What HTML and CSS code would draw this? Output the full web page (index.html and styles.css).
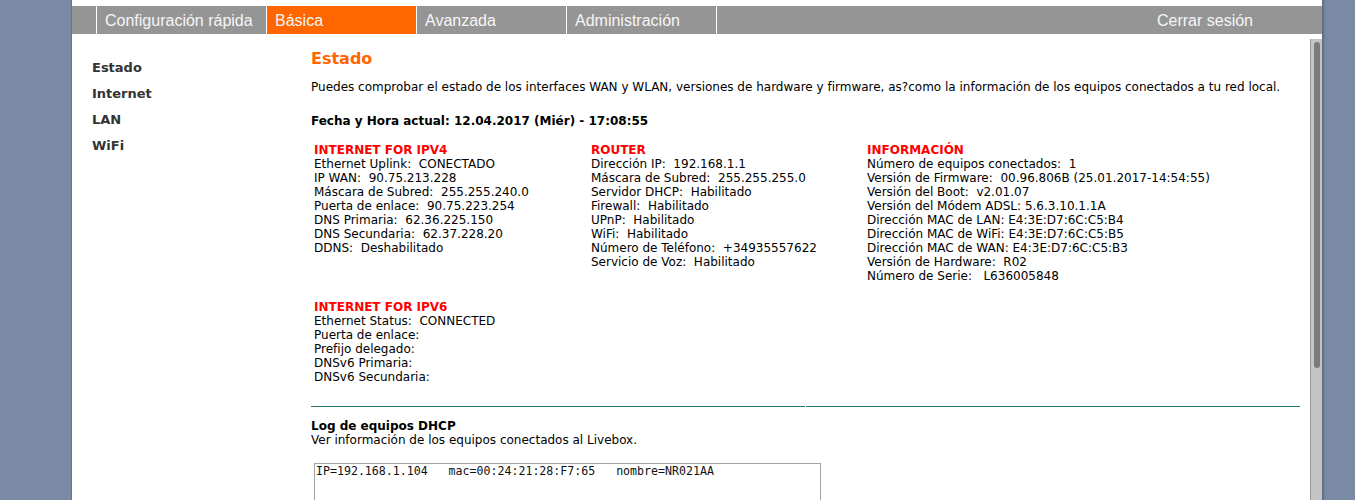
FILE: index.html
```html
<!DOCTYPE html>
<html lang="es">
<head>
<meta charset="utf-8">
<title>Estado</title>
<link rel="stylesheet" href="styles.css">
</head>
<body>
<div class="page">
  <nav class="topnav">
    <div class="tab tab-blank"></div>
    <div class="tab tab-wide">Configuración rápida</div>
    <div class="tab tab-active">Básica</div>
    <div class="tab">Avanzada</div>
    <div class="tab">Administración</div>
    <div class="tab tab-rest">Cerrar sesión</div>
  </nav>
  <div class="main">
    <aside class="side">
      <div class="side-item">Estado</div>
      <div class="side-item">Internet</div>
      <div class="side-item">LAN</div>
      <div class="side-item">WiFi</div>
    </aside>
    <div class="frame">
      <div class="content">
        <h1 class="title">Estado</h1>
        <p class="intro">Puedes comprobar el estado de los interfaces WAN y WLAN, versiones de hardware y firmware, as?como la información de los equipos conectados a tu red local.</p>
        <p class="date">Fecha y Hora actual: 12.04.2017 (Miér) - 17:08:55</p>
        <div class="grid">
          <div class="col">
            <div class="col-title">INTERNET FOR IPV4</div>
            <div>Ethernet Uplink:&nbsp; CONECTADO</div>
            <div>IP WAN:&nbsp; 90.75.213.228</div>
            <div>Máscara de Subred:&nbsp; 255.255.240.0</div>
            <div>Puerta de enlace:&nbsp; 90.75.223.254</div>
            <div>DNS Primaria:&nbsp; 62.36.225.150</div>
            <div>DNS Secundaria:&nbsp; 62.37.228.20</div>
            <div>DDNS:&nbsp; Deshabilitado</div>
          </div>
          <div class="col">
            <div class="col-title">ROUTER</div>
            <div>Dirección IP:&nbsp; 192.168.1.1</div>
            <div>Máscara de Subred:&nbsp; 255.255.255.0</div>
            <div>Servidor DHCP:&nbsp; Habilitado</div>
            <div>Firewall:&nbsp; Habilitado</div>
            <div>UPnP:&nbsp; Habilitado</div>
            <div>WiFi:&nbsp; Habilitado</div>
            <div>Número de Teléfono:&nbsp; +34935557622</div>
            <div>Servicio de Voz:&nbsp; Habilitado</div>
          </div>
          <div class="col">
            <div class="col-title">INFORMACIÓN</div>
            <div>Número de equipos conectados:&nbsp; 1</div>
            <div>Versión de Firmware:&nbsp; 00.96.806B (25.01.2017-14:54:55)</div>
            <div>Versión del Boot:&nbsp; v2.01.07</div>
            <div>Versión del Módem ADSL: 5.6.3.10.1.1A</div>
            <div>Dirección MAC de LAN: E4:3E:D7:6C:C5:B4</div>
            <div>Dirección MAC de WiFi: E4:3E:D7:6C:C5:B5</div>
            <div>Dirección MAC de WAN: E4:3E:D7:6C:C5:B3</div>
            <div>Versión de Hardware:&nbsp; R02</div>
            <div>Número de Serie:&nbsp;&nbsp; L636005848</div>
          </div>
          <div class="col col-v6">
            <div class="col-title">INTERNET FOR IPV6</div>
            <div>Ethernet Status:&nbsp; CONNECTED</div>
            <div>Puerta de enlace:</div>
            <div>Prefijo delegado:</div>
            <div>DNSv6 Primaria:</div>
            <div>DNSv6 Secundaria:</div>
          </div>
        </div>
        <div class="rule"><span></span><span></span></div>
        <div class="log-title">Log de equipos DHCP</div>
        <div class="log-desc">Ver información de los equipos conectados al Livebox.</div>
        <div class="logbox">IP=192.168.1.104   mac=00:24:21:28:F7:65   nombre=NR021AA</div>
      </div>
      <div class="scrollbar"><div class="thumb"></div></div>
    </div>
  </div>
</div>
</body>
</html>
```
FILE: styles.css
```css
html, body {
  margin: 0;
  padding: 0;
}
body {
  background: #7a8aa4;
  height: 500px;
  overflow: hidden;
}
.page {
  margin-left: 72px;
  width: 1250px;
  height: 500px;
  background: #ffffff;
  padding-top: 6px;
  box-sizing: border-box;
  box-shadow: -1px 0 0 #66748c, 2px 0 2px #5f6c83;
  display: flex;
  flex-direction: column;
}
.topnav {
  display: flex;
  height: 28px;
  background: #959595;
  font-family: "Liberation Sans", Arial, sans-serif;
  font-size: 16px;
  color: #f5f5f5;
  flex: none;
}
.tab {
  height: 28px;
  box-sizing: border-box;
  padding: 1px 0 0 8px;
  line-height: 27px;
  width: 150px;
  border-left: 1px solid #ffffff;
  white-space: nowrap;
}
.tab-blank {
  width: 24px;
  border-left: none;
  padding: 0;
}
.tab-wide {
  width: 170px;
}
.tab-active {
  background: #ff6600;
}
.tab-rest {
  flex: 1;
  text-align: right;
  padding-right: 69px;
}
.main {
  display: flex;
  flex: 1;
  min-height: 0;
}
.side {
  width: 239px;
  flex: none;
  padding: 26px 0 0 20px;
  box-sizing: border-box;
  font-family: "DejaVu Sans", Verdana, sans-serif;
  font-weight: bold;
  font-size: 13px;
  color: #333333;
}
.side-item {
  height: 26px;
  line-height: 16px;
}
.frame {
  flex: 1;
  display: flex;
  min-width: 0;
}
.content {
  flex: 1;
  min-width: 0;
  font-family: "DejaVu Sans", Verdana, sans-serif;
  font-size: 12px;
  line-height: 14px;
  color: #000000;
  padding-right: 10px;
}
.title {
  margin: 15px 0 0 0;
  font-size: 16px;
  line-height: 19px;
  color: #ff6600;
  font-weight: bold;
}
.intro {
  margin: 12px 0 0 0;
  white-space: nowrap;
}
.date {
  margin: 20px 0 0 0;
  font-weight: bold;
}
.grid {
  display: grid;
  grid-template-columns: 277px 276px 1fr;
  row-gap: 17px;
  margin-top: 15px;
  padding-left: 3px;
}
.col {
  white-space: nowrap;
}
.col-v6 {
  grid-column: 1;
}
.col-title {
  color: #ff0000;
  font-weight: bold;
}
.rule {
  margin: 22px 0 0 0;
  display: flex;
  width: 989px;
  height: 1px;
}
.rule span {
  flex: 1;
  background: #277876;
}
.rule span + span {
  margin-left: 1px;
}
.log-title {
  margin-top: 12px;
  font-weight: bold;
}
.log-desc {
  margin-top: 0;
}
.logbox {
  margin: 16px 0 0 3px;
  width: 503px;
  height: 60px;
  border: 1px solid #a3a3a3;
  font-family: "DejaVu Sans Mono", monospace;
  font-size: 11.6px;
  line-height: 14px;
  padding: 0 1px;
  white-space: pre;
  color: #111111;
}
.scrollbar {
  width: 11px;
  flex: none;
  margin-top: 5px;
  background: #c4c4c4;
  border-left: 1px solid #9c9c9c;
}
.thumb {
  margin: 3px auto 0;
  width: 6px;
  height: 326px;
  background: #7b7b7b;
  border-radius: 3px;
}
```
